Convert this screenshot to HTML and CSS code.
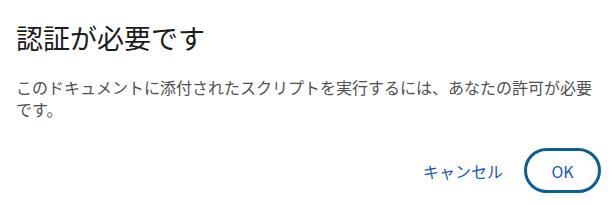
FILE: index.html
```html
<!DOCTYPE html>
<html lang="ja">
<head>
    <meta charset="UTF-8">
    <meta name="viewport" content="width=device-width, initial-scale=1.0">
    <title>認証が必要です</title>
    <link rel="stylesheet" href="styles.css">
</head>
<body>
    <div class="dialogo">
        <h2 class="titulo">認証が必要です</h2>
        <p class="mensaje">このドキュメントに添付されたスクリプトを実行するには、あなたの許可が必要です。</p>
        <div class="acciones">
            <button class="btn-cancelar">キャンセル</button>
            <button class="btn-ok">OK</button>
        </div>
    </div>
</body>
</html>
```

FILE: styles.css
```css
body {
    margin: 0;
    background-color: #fff;
    font-family: "Noto Sans CJK JP", "Noto Sans", sans-serif;
}

.dialogo {
    width: 614px;
    height: 205px;
    box-sizing: border-box;
    padding: 20px 16px 0 16px;
}

.titulo {
    margin: 0;
    font-size: 27px;
    font-weight: normal;
    line-height: 36px;
    color: #1b1b1b;
}

.mensaje {
    margin: 20px 0 0 0;
    font-size: 16px;
    line-height: 22px;
    color: #505050;
}

.acciones {
    display: flex;
    justify-content: flex-end;
    align-items: center;
    gap: 21px;
    margin-top: 28px;
    margin-right: -3px;
}

.acciones button {
    font-family: inherit;
    font-size: 16px;
    background: none;
    cursor: pointer;
    color: #1a56c4;
}

.btn-cancelar {
    border: none;
    padding: 0;
}

.btn-ok {
    width: 77px;
    height: 45px;
    border: 3px solid #0b5f94;
    border-radius: 23px;
    padding: 0;
}
```
